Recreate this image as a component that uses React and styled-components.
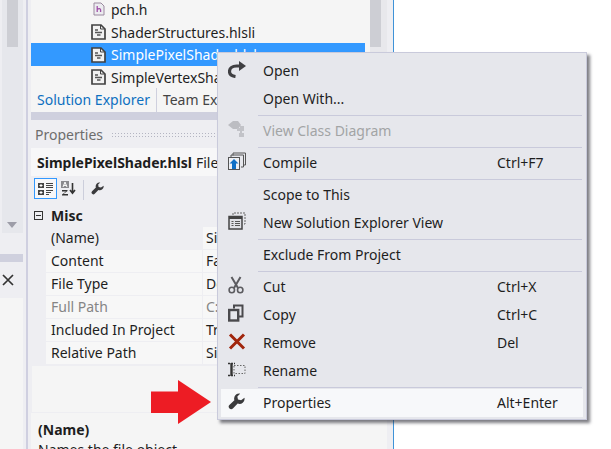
import React from 'react'
import styled, { createGlobalStyle } from 'styled-components'

const Global = createGlobalStyle`
  html, body { margin: 0; padding: 0; background: #fff; }
  body { font-family: "Noto Sans", "Open Sans", sans-serif; font-size: 14px; color: #1e1e1e; }
`;

const Page = styled.div`
  position: relative;
  display: flex;
  width: 611px;
  height: 449px;
  overflow: hidden;
  background: #fff;
`;

/* left docked window */
const LeftDock = styled.div`
  width: 26px;
  background: #eeeef2;
  display: flex;
  flex-direction: column;
`;
const LeftTrack = styled.div`
  height: 233px;
  width: 21px;
  margin-left: 2px;
  background: #e6e7ec;
  box-sizing: border-box;
  padding-left: 5px;
  display: flex;
  flex-direction: column;
  justify-content: space-between;
`;
const LeftThumb = styled.div`
  width: 11px;
  height: 47px;
  background: #cdced4;
`;
const DownArrow = styled.div`
  width: 0;
  height: 0;
  margin-bottom: 5px;
  border-left: 5.5px solid transparent;
  border-right: 5.5px solid transparent;
  border-top: 6px solid #9d9da8;
`;
const LeftBand = styled.div`
  width: 23px;
  height: 8px;
  margin-top: 21px;
  background: #cfd0de;
`;
const LeftHeader = styled.div`
  width: 23px;
  height: 36px;
  padding-left: 2px;
  box-sizing: border-box;
  display: flex;
  align-items: center;
`;
const LeftBody = styled.div`
  flex: 1;
  width: 23px;
  background: #f5f5f5;
`;
const Splitter = styled.div`
  width: 2px;
  background: #cfcfe0;
`;

/* solution explorer + properties column */
const Main = styled.div`
  width: 356px;
  height: 449px;
  padding: 0 6px 0 3px;
  background: #eeeef2;
  border-right: 1px solid #3f93d8;
  display: flex;
  flex-direction: column;
  & > * { flex-shrink: 0; }
`;
const TreeArea = styled.div`
  height: 88px;
  display: flex;
  background: #f5f5f5;
`;
const TreeList = styled.div`
  width: 334px;
  flex-shrink: 0;
  margin-top: -2px;
`;
const TreeRow = styled.div`
  height: 22.7px;
  display: flex;
  align-items: center;
  box-sizing: border-box;
  padding-left: ${p => p.$small ? 62 : 60}px;
  gap: ${p => p.$small ? 6 : 5}px;
  background: ${p => p.$selected ? '#3399ff' : 'transparent'};
  color: ${p => p.$selected ? '#fff' : '#1e1e1e'};
  white-space: nowrap;
`;
const TreeScroll = styled.div`
  width: 17px;
  margin-left: 5px;
  background: #e8e8ec;
`;
const TreeThumb = styled.div`
  width: 11px;
  height: 47px;
  background: #cdced4;
`;
const TabStrip = styled.div`
  height: 24px;
  background: #f5f5f5;
  display: flex;
  align-items: center;
`;
const Tab = styled.div`
  height: 24px;
  line-height: 23px;
  padding: 0 6px;
  color: ${p => p.$active ? '#0e70c0' : '#444'};
  border-right: ${p => p.$active ? '1px solid #cfd0de' : 'none'};
  white-space: nowrap;
`;
const HBand = styled.div`
  height: 8px;
  background: #cfd0de;
`;
const PanelHeader = styled.div`
  height: 28px;
  display: flex;
  align-items: center;
  padding-left: 4px;
  gap: 8px;
  color: #6d6d6d;
`;
const Grip = styled.div`
  flex: 1;
  height: 5px;
  background-image: radial-gradient(#b4b5c2 0.9px, transparent 1px);
  background-size: 3px 3px;
`;
const TitleBar = styled.div`
  height: 28px;
  padding-left: 6px;
  display: flex;
  align-items: center;
  gap: 4px;
  background: #f7f7f8;
  white-space: nowrap;
`;
const TitleName = styled.b`
  font-weight: 700;
`;
const Toolbar = styled.div`
  height: 28px;
  box-sizing: border-box;
  display: flex;
  align-items: flex-start;
  padding: 2px 0 0 3px;
  gap: 2px;
`;
const ToolButton = styled.div`
  width: ${p => p.$wide ? 23 : 18}px;
  height: 21px;
  box-sizing: border-box;
  display: flex;
  align-items: center;
  justify-content: center;
  border: 1px solid ${p => p.$on ? '#3399ff' : 'transparent'};
  background: ${p => p.$on ? '#f7f7f9' : 'transparent'};
`;
const ToolSep = styled.div`
  width: 1px;
  height: 20px;
  margin: 2px 2px 0 4px;
  background: #cccedb;
`;
const CategoryRow = styled.div`
  height: 23px;
  display: flex;
  align-items: center;
  padding-left: 3px;
  gap: 8px;
  font-weight: 700;
`;
const PropRow = styled.div`
  height: 23px;
  box-sizing: border-box;
  margin-left: 15px;
  display: grid;
  grid-template-columns: 156px 1fr;
  column-gap: 1px;
  border-bottom: 1px solid #eeeef2;
  color: ${p => p.$muted ? '#858585' : '#1e1e1e'};
  white-space: nowrap;
`;
const PropCell = styled.div`
  background: ${p => p.$flat ? '#eeeef2' : '#f7f7f7'};
  padding-left: ${p => p.$value ? 3 : 5}px;
  line-height: 22px;
  overflow: hidden;
`;
const BlankArea = styled.div`
  height: 46px;
  margin: 1px 0 0 1px;
  background: #f5f5f5;
`;
const Description = styled.div`
  flex: 1;
  margin-top: 1px;
  padding: 7px 0 0 7px;
  background: #f5f5f5;
  line-height: 20px;
`;
const DescName = styled.div`
  font-weight: 700;
`;

/* context menu floats over everything */
const Menu = styled.div`
  position: absolute;
  left: 217px;
  top: 52px;
  width: 370px;
  height: 368px;
  box-sizing: border-box;
  padding: 4px 3px 0 3px;
  background: #e6e7ec;
  border: 1px solid #c9cadb;
  box-shadow: 3px 3px 3px rgba(40, 40, 50, 0.6);
`;
const MenuRow = styled.div`
  height: 28px;
  display: grid;
  grid-template-columns: 42px 234px 1fr;
  align-items: center;
  background: ${p => p.$hot ? '#f7f8fa' : 'transparent'};
  color: ${p => p.$disabled ? '#a2a4a5' : '#1e1e1e'};
  white-space: nowrap;
`;
const MenuIcon = styled.div`
  display: flex;
  align-items: center;
  box-sizing: border-box;
  height: 28px;
  padding: 0 0 4px 7px;
`;
const MenuText = styled.span`
  margin-bottom: 2px;
`;
const MenuSep = styled.div`
  height: 1px;
  margin: 1.5px 1px 1.5px 37px;
  background: #c9cadb;
`;
const Callout = styled.svg`
  position: absolute;
  left: 151px;
  top: 380px;
`;

const FileIcon = () => (
  <svg width="15" height="16" viewBox="0 0 15 16">
    <path d="M1 1h9l4 4v10H1z" fill="#f2f2f2" stroke="#424242" strokeWidth="1.7" />
    <path d="M4 6h3M4 8.500h7M6 11h3.500" stroke="#555" strokeWidth="1.300" fill="none" />
    <path d="M9.500 1v4h4" fill="none" stroke="#424242" />
  </svg>
);

const HeaderIcon = () => (
  <svg width="12" height="14" viewBox="0 0 12 14">
    <path d="M1 1h7l3 3v9H1z" fill="#ececf0" stroke="#9b8a9f" />
    <path d="M4.200 4v6M4.200 7.400c1.600-1.400 3.400-1 3.400.6V10" stroke="#a050a8" strokeWidth="1.300" fill="none" />
  </svg>
);

const CloseGlyph = () => (
  <svg width="12" height="12" viewBox="0 0 12 12">
    <path d="M1 1l10 10M11 1L1 11" stroke="#333" strokeWidth="1.700" />
  </svg>
);

const MinusBox = () => (
  <svg width="9" height="9" viewBox="0 0 9 9">
    <rect x="0.500" y="0.500" width="8" height="8" fill="none" stroke="#333" />
    <path d="M2 4.500h5" stroke="#333" />
  </svg>
);

const CategorizedIcon = () => (
  <svg width="16" height="14" viewBox="0 0 16 14">
    <rect x="0" y="1" width="6" height="5" fill="#444" />
    <rect x="0" y="8" width="6" height="5" fill="#444" />
    <path d="M1.500 3.500h3M3 2v3M1.500 10.500h3M3 9v3" stroke="#fff" />
    <path d="M8 1.500h7M8 3.500h7M8 5.500h7M8 8.500h7M8 10.500h5M8 12.500h3" stroke="#444" />
  </svg>
);

const SortIcon = () => (
  <svg width="15" height="15" viewBox="0 0 15 15">
    <rect x="0" y="0" width="8" height="7" fill="#8a8a8e" />
    <path d="M2 6l2-5 2 5M2.800 4.400h2.400" stroke="#fff" fill="none" />
    <path d="M1 9h5.500v1L2.500 13H7v1.400H1v-1l4-3H1z" fill="#333" />
    <path d="M11.500 2v10M9 9l2.500 3.200L14 9" stroke="#333" strokeWidth="1.600" fill="none" />
  </svg>
);

const Wrench = ({ size = 13 }) => (
  <svg width={size} height={size} viewBox="0 0 16 16">
    <path d="M15.500 4.500a4.800 4.800 0 0 1-6.400 5.400L4.600 14.600a2.300 2.300 0 0 1-3.300-3.200L6 6.800A4.800 4.800 0 0 1 11.400.6L8.800 3.200l.6 2.900 2.900.7z" fill="#3a3a3c" />
  </svg>
);

const OpenIcon = () => (
  <svg width="18" height="17" viewBox="0 0 18 17">
    <path d="M7.500 15.500C3.500 15 1.500 13 1.500 10.500 1.500 7 4.500 5 8.500 5H13" fill="none" stroke="#3f3f42" strokeWidth="3.200" />
    <path d="M11 0l7 5-7 5z" fill="#3f3f42" />
  </svg>
);

const ClassDiagramIcon = () => (
  <svg width="18" height="18" viewBox="0 0 18 18">
    <path d="M0 5l5-4h5l3 4-3 4H5z" fill="#bcbdc2" />
    <path d="M9 8h3V6h4v5h-2v2h2v4h-5v-4h1v-2H9z" fill="#c2c3c8" />
  </svg>
);

const CompileIcon = () => (
  <svg width="18" height="18" viewBox="0 0 18 18">
    <path d="M5 3.500V1h12.500v12H15M3 5.500V3h12.500v12H13" fill="none" stroke="#555" strokeWidth="1" />
    <rect x="0.500" y="5.500" width="11" height="12" fill="#eef0f4" stroke="#555" />
    <path d="M6 7l4.500 4.500H8V17H4v-5.500H1.500z" fill="#0f6fc6" />
  </svg>
);

const NewViewIcon = () => (
  <svg width="18" height="18" viewBox="0 0 18 18">
    <path d="M5 3V1h12v11h-2" fill="none" stroke="#666" strokeDasharray="2 1" />
    <rect x="1" y="4.500" width="13" height="12.500" fill="#dfe0e6" stroke="#444" strokeWidth="1.500" />
    <rect x="1" y="4.500" width="13" height="2.500" fill="#444" />
    <path d="M3.500 9.500h2M3.500 11.500h2M3.500 13.500h2M7 9.500h5M7 11.500h5M7 13.500h5" stroke="#555" />
  </svg>
);

const CutIcon = () => (
  <svg width="16" height="18" viewBox="0 0 16 18">
    <path d="M3.500 1l6.500 11M12.500 1L6 12" stroke="#5c5c60" strokeWidth="2" fill="none" />
    <circle cx="3.800" cy="14" r="2.700" fill="none" stroke="#5c5c60" strokeWidth="1.600" />
    <circle cx="12.200" cy="14" r="2.700" fill="none" stroke="#5c5c60" strokeWidth="1.600" />
  </svg>
);

const CopyIcon = () => (
  <svg width="16" height="18" viewBox="0 0 16 18">
    <path d="M6 4.500V1.500h8.500v11H11" fill="none" stroke="#4a4a4d" strokeWidth="2" />
    <rect x="1.200" y="6" width="9" height="10.500" fill="none" stroke="#4a4a4d" strokeWidth="2.400" />
  </svg>
);

const RemoveIcon = () => (
  <svg width="18" height="17" viewBox="0 0 18 17">
    <path d="M2 1.500l14 14M16 1.500L2 15.500" stroke="#a1260d" strokeWidth="3" />
  </svg>
);

const RenameIcon = () => (
  <svg width="18" height="15" viewBox="0 0 18 15">
    <rect x="6" y="3.500" width="11" height="8" fill="none" stroke="#666" strokeDasharray="1.500 1.500" />
    <path d="M3.500 1v13" stroke="#333" strokeWidth="2.400" fill="none" />
    <path d="M0 1.500h7M0 13.500h7" stroke="#333" strokeWidth="1.700" fill="none" strokeDasharray="2 1" />
  </svg>
);

const treeFiles = [
  { name: 'pch.h', small: true },
  { name: 'ShaderStructures.hlsli' },
  { name: 'SimplePixelShader.hlsl', selected: true },
  { name: 'SimpleVertexShader.hlsl' },
];

const properties = [
  { name: '(Name)', value: 'SimplePixelShader.hlsl', flat: true },
  { name: 'Content', value: 'False' },
  { name: 'File Type', value: 'Does not participate' },
  { name: 'Full Path', value: 'C:\\Users', muted: true },
  { name: 'Included In Project', value: 'True' },
  { name: 'Relative Path', value: 'SimplePixelShader.hlsl' },
];

const menu = [
  [{ label: 'Open', icon: <OpenIcon /> }, { label: 'Open With...' }],
  [{ label: 'View Class Diagram', icon: <ClassDiagramIcon />, disabled: true }],
  [{ label: 'Compile', icon: <CompileIcon />, keys: 'Ctrl+F7' }],
  [{ label: 'Scope to This' }, { label: 'New Solution Explorer View', icon: <NewViewIcon /> }],
  [{ label: 'Exclude From Project' }],
  [
    { label: 'Cut', icon: <CutIcon />, keys: 'Ctrl+X' },
    { label: 'Copy', icon: <CopyIcon />, keys: 'Ctrl+C' },
    { label: 'Remove', icon: <RemoveIcon />, keys: 'Del' },
    { label: 'Rename', icon: <RenameIcon /> },
  ],
  [{ label: 'Properties', icon: <Wrench size={17} />, keys: 'Alt+Enter', hot: true }],
];

export default function App() {
  return (
    <Page>
      <Global />
      <LeftDock>
        <LeftTrack>
          <LeftThumb />
          <DownArrow />
        </LeftTrack>
        <LeftBand />
        <LeftHeader><CloseGlyph /></LeftHeader>
        <LeftBody />
      </LeftDock>
      <Splitter />
      <Main>
        <TreeArea>
          <TreeList>
            {treeFiles.map(f => (
              <TreeRow key={f.name} $small={f.small} $selected={f.selected}>
                {f.small ? <HeaderIcon /> : <FileIcon />}
                {f.name}
              </TreeRow>
            ))}
          </TreeList>
          <TreeScroll><TreeThumb /></TreeScroll>
        </TreeArea>
        <TabStrip>
          <Tab $active>Solution Explorer</Tab>
          <Tab>Team Explorer</Tab>
        </TabStrip>
        <HBand />
        <PanelHeader>Properties<Grip /></PanelHeader>
        <TitleBar><TitleName>SimplePixelShader.hlsl</TitleName> File Properties</TitleBar>
        <Toolbar>
          <ToolButton $on $wide><CategorizedIcon /></ToolButton>
          <ToolButton><SortIcon /></ToolButton>
          <ToolSep />
          <ToolButton><Wrench /></ToolButton>
        </Toolbar>
        <CategoryRow><MinusBox />Misc</CategoryRow>
        {properties.map(p => (
          <PropRow key={p.name} $muted={p.muted}>
            <PropCell $flat={p.flat}>{p.name}</PropCell>
            <PropCell $value>{p.value}</PropCell>
          </PropRow>
        ))}
        <BlankArea />
        <Description>
          <DescName>(Name)</DescName>
          Names the file object.
        </Description>
      </Main>

      <Menu>
        {menu.map((group, i) => (
          <React.Fragment key={i}>
            {i > 0 && <MenuSep />}
            {group.map(item => (
              <MenuRow key={item.label} $disabled={item.disabled} $hot={item.hot}>
                <MenuIcon>{item.icon}</MenuIcon>
                <MenuText>{item.label}</MenuText>
                <MenuText>{item.keys}</MenuText>
              </MenuRow>
            ))}
          </React.Fragment>
        ))}
      </Menu>

      <Callout width="60" height="44" viewBox="0 0 60 44">
        <path d="M0 11.500h27V0l33 22-33 22V33H0z" fill="#ed1c24" />
      </Callout>
    </Page>
  )
}
